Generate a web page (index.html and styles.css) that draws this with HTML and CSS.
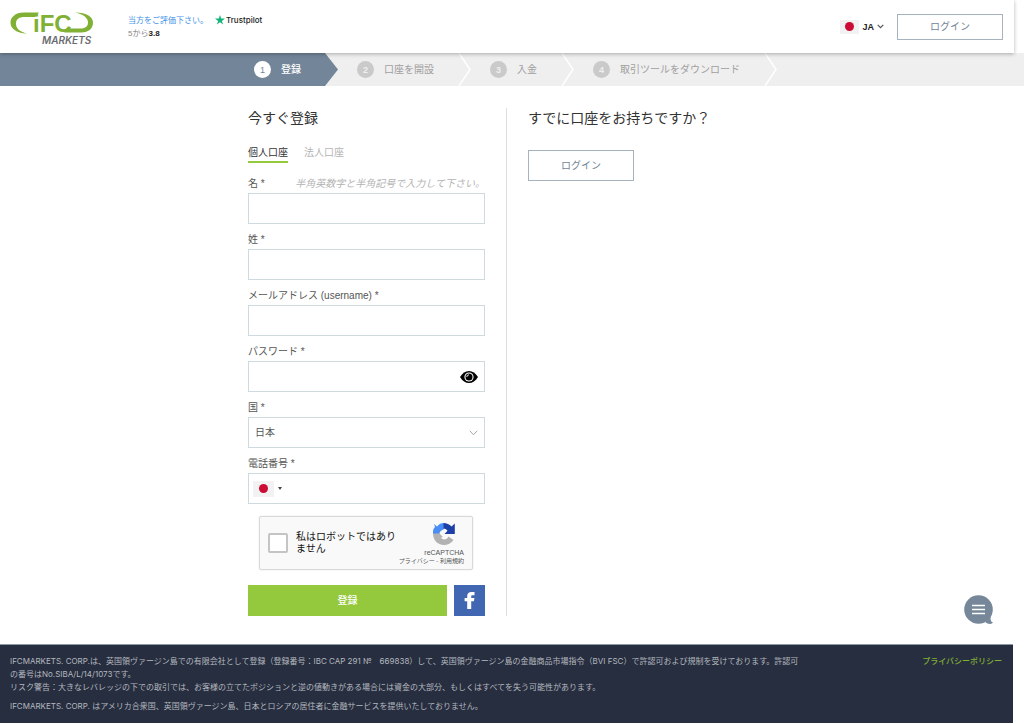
FILE: index.html
```html
<!DOCTYPE html>
<html lang="ja">
<head>
<meta charset="utf-8">
<meta name="viewport" content="width=device-width, initial-scale=1">
<title>IFC Markets - 登録</title>
<link rel="stylesheet" href="styles.css">
</head>
<body>
<header class="header">
  <a class="logo" href="#" aria-label="IFC Markets">
    <svg width="84" height="38" viewBox="10 8 84 38">
      <g fill="#80b034">
        <path d="M39 12.500H24C15 12.500 10.500 17.500 10.500 22.500C10.500 28.500 16 33 27 33.500C19.500 31.500 16 28.500 16 23.500C16 19 19.500 17 24 17H35Z"/>
        <path d="M64 32.500H81C89 32.500 93 28 93 23C93 17 87 12.500 75 12.500C84 14.500 88 18 88 22.500C88 26.500 85 28.500 80 28.500H70Z"/>
        <text class="logo-mark" x="33" y="32">iFC</text>
      </g>
      <text class="logo-sub" x="42" y="44" fill="#6b6c70">MARKETS</text>
    </svg>
  </a>
  <div class="rating">
    <div class="rating-row">
      <a class="rating-link" href="#">当方をご評価下さい。</a>
      <svg class="star" width="10" height="10" viewBox="0 0 10 10"><path fill="#13b67a" d="M5 0L6.200 3.600H10L6.900 5.900L8.100 9.600L5 7.300L1.900 9.600L3.100 5.900L0 3.600H3.800Z"/></svg>
      <span class="brand">Trustpilot</span>
    </div>
    <div class="score">5から<b>3.8</b></div>
  </div>
  <div class="header-actions">
    <button class="lang" type="button">
      <span class="flag flag-small"></span>
      JA
      <svg width="7" height="5" viewBox="0 0 7 5"><path d="M.7.8L3.500 3.600L6.300.8" fill="none" stroke="#555" stroke-width="1.200"/></svg>
    </button>
    <button class="outline-button header-login" type="button">ログイン</button>
  </div>
</header>

<ol class="steps">
  <li class="step active"><span class="num">1</span>登録
    <svg class="tip" width="13" height="33" viewBox="0 0 13 33"><path d="M0 0L13 16.500L0 33Z" fill="#738598"/></svg></li>
  <li class="step"><span class="num">2</span>口座を開設
    <svg class="tip" width="13" height="33" viewBox="0 0 13 33"><path d="M1 0L12 16.500L1 33" fill="none" stroke="#fff" stroke-width="1.500"/></svg></li>
  <li class="step"><span class="num">3</span>入金
    <svg class="tip" width="13" height="33" viewBox="0 0 13 33"><path d="M1 0L12 16.500L1 33" fill="none" stroke="#fff" stroke-width="1.500"/></svg></li>
  <li class="step"><span class="num">4</span>取引ツールをダウンロード
    <svg class="tip" width="13" height="33" viewBox="0 0 13 33"><path d="M1 0L12 16.500L1 33" fill="none" stroke="#fff" stroke-width="1.500"/></svg></li>
</ol>

<main class="content">
  <section class="register">
    <h1 class="title">今すぐ登録</h1>
    <nav class="tabs">
      <a class="tab current" href="#">個人口座</a>
      <a class="tab" href="#">法人口座</a>
    </nav>
    <form class="form">
      <div class="field">
        <div class="label-row"><label for="first">名 *</label><span class="hint">半角英数字と半角記号で入力して下さい。</span></div>
        <input class="control" id="first" type="text">
      </div>
      <div class="field">
        <div class="label-row"><label for="last">姓 *</label></div>
        <input class="control" id="last" type="text">
      </div>
      <div class="field">
        <div class="label-row"><label for="email">メールアドレス (username) *</label></div>
        <input class="control" id="email" type="email">
      </div>
      <div class="field">
        <div class="label-row"><label for="password">パスワード *</label></div>
        <div class="control-wrap">
          <input class="control" id="password" type="password">
          <button class="eye" type="button" aria-label="パスワードを表示">
            <svg width="18" height="12" viewBox="0 0 18 12"><path d="M0 6C2.500 2 5.500 0 9 0S15.500 2 18 6C15.500 10 12.500 12 9 12S2.500 10 0 6Z"/><circle cx="9" cy="6" r="4.600" fill="#fff"/><circle cx="9" cy="6" r="3.500"/><path d="M6.800 6A2.200 2.200 0 0 1 9 3.800" fill="none" stroke="#fff" stroke-width=".9"/></svg>
          </button>
        </div>
      </div>
      <div class="field">
        <div class="label-row"><label for="country">国 *</label></div>
        <div class="control-wrap">
          <select class="control" id="country"><option>日本</option></select>
          <svg class="select-arrow" width="9" height="6" viewBox="0 0 9 6"><path d="M.8.8L4.500 4.800L8.200.8" fill="none" stroke="#a5a5a5"/></svg>
        </div>
      </div>
      <div class="field">
        <div class="label-row"><label for="phone">電話番号 *</label></div>
        <div class="control phone">
          <button class="phone-country" type="button" aria-label="国番号">
            <span class="flag"></span>
            <svg width="4" height="3" viewBox="0 0 4 3"><path d="M0 0H4L2 3Z" fill="#444"/></svg>
          </button>
          <input class="phone-input" id="phone" type="tel">
        </div>
      </div>
      <div class="captcha">
        <input class="captcha-box" id="robot" type="checkbox">
        <label class="captcha-label" for="robot">私はロボットではありません</label>
        <div class="captcha-side">
          <svg width="24" height="24" viewBox="0 0 24 24">
            <path fill="#4a8ef5" d="M2 2L5 4.500C7 2 9 1 12 1V7L9.500 8.500C8 9.500 7.500 10.500 7.500 12H1V10C1 8 1.500 6.500 3 5Z"/>
            <path fill="#1c3fa8" d="M11.500 1C14.500 1 17.500 2.300 19.500 4.500L22.800 1.500V12H12.500L15.500 8.800C14.500 7.300 13 6.500 11.500 6.500Z"/>
            <path fill="#b2b2b2" d="M1 11.500H7.500L11 15L8.900 15.500C10.500 18.500 15 18 16.500 14.500L21.500 18C19 21.500 15.800 23 12 23C5.500 23 1 18 1 11.500Z"/>
          </svg>
          <span class="captcha-name">reCAPTCHA</span>
          <span class="captcha-terms"><a href="#">プライバシー</a> - <a href="#">利用規約</a></span>
        </div>
      </div>
      <div class="submit-row">
        <button class="submit" type="submit">登録</button>
        <button class="facebook" type="button" aria-label="Facebook">
          <svg width="12" height="19" viewBox="0 0 12 19"><path fill="#fff" d="M3.200 18V10.300H.6V7H3.200V5C3.200 2.300 4.900.9 7.500.9C8.700.9 9.900 1 10.500 1.100V4.200H8.700C7.500 4.200 7.200 4.700 7.200 5.500V7H10.400L9.900 10.300H7.200V18Z"/></svg>
        </button>
      </div>
    </form>
  </section>
  <section class="existing">
    <h2 class="title">すでに口座をお持ちですか？</h2>
    <button class="outline-button existing-login" type="button">ログイン</button>
  </section>
</main>

<footer class="footer">
  <div class="legal">
    <p>IFCMARKETS. CORP.は、英国領ヴァージン島での有限会社として登録（登録番号：IBC CAP 291 №　669838）して、英国領ヴァージン島の金融商品市場指令（BVI FSC）で許認可および規制を受けております。許認可<br>の番号はNo.SIBA/L/14/1073です。<br>リスク警告：大きなレバレッジの下での取引では、お客様の立てたポジションと逆の値動きがある場合には資金の大部分、もしくはすべてを失う可能性があります。</p>
    <p>IFCMARKETS. CORP. はアメリカ合衆国、英国領ヴァージン島、日本とロシアの居住者に金融サービスを提供いたしておりません。</p>
  </div>
  <a class="privacy" href="#">プライバシーポリシー</a>
</footer>

<button class="chat" type="button" aria-label="チャット">
  <svg width="30" height="30" viewBox="0 0 30 30"><circle cx="14.500" cy="14.500" r="14.300" fill="#758799"/><path d="M18 28C22 27 25 24 27 21C26 25 27 27 29 27.500C28 29.500 24 29.500 21 27Z" fill="#758799"/><path d="M8 10.500H21M8 14.500H21M8 18.500H21" stroke="#fff" stroke-width="1.500"/></svg>
</button>
</body>
</html>
```
FILE: styles.css
```css
* {
  box-sizing: border-box;
}

body {
  margin: 0;
  background: #fff;
  color: #555;
  font-family: "Liberation Sans", "Noto Sans CJK JP", sans-serif;
  font-size: 10px;
  line-height: 12px;
}

button,
input,
select {
  font: inherit;
  color: inherit;
}

button {
  padding: 0;
  border: 0;
  background: none;
  cursor: pointer;
}

a {
  color: inherit;
  text-decoration: none;
}

svg {
  display: block;
}

/* Header */
.header {
  position: relative;
  z-index: 1;
  display: flex;
  align-items: center;
  height: 53px;
  margin-right: 10px;
  padding: 0 11px 0 10px;
  background: #fff;
  box-shadow: 0 1px 4px rgba(0, 0, 0, 0.3);
}

.logo-mark {
  font-family: "Liberation Sans", sans-serif;
  font-size: 24px;
  font-weight: 700;
}

.logo-sub {
  font-family: Inter, sans-serif;
  font-size: 10px;
  font-weight: 600;
  font-style: italic;
}

.rating {
  margin-left: 34px;
  font-size: 8px;
  line-height: 13px;
}

.rating-row {
  display: flex;
  align-items: center;
}

.rating-link {
  color: #4393e6;
}

.star {
  margin-left: 7px;
}

.brand {
  margin-left: 1px;
  color: #222;
  font-weight: 500;
  font-family: Inter, sans-serif;
}

.score {
  color: #888;
}

.score b {
  color: #222;
}

.header-actions {
  display: flex;
  align-items: center;
  gap: 13px;
  margin-left: auto;
}

.lang {
  display: flex;
  align-items: center;
  gap: 3px;
  color: #222;
  font-size: 9px;
  font-weight: 700;
}

.flag {
  display: grid;
  place-items: center;
  width: 21px;
  height: 16px;
  background: #f2f2f2;
}

.flag::after {
  content: "";
  width: 9px;
  height: 9px;
  border-radius: 50%;
  background: #cc0c35;
}

.flag-small {
  width: 19px;
  height: 14px;
}

.outline-button {
  width: 106px;
  border: 1px solid #a6b2be;
  color: #738598;
}

.header-login {
  height: 26px;
}

/* Progress steps */
.steps {
  display: flex;
  margin: 0;
  padding: 0;
  background: #efefef;
  list-style: none;
}

.step {
  position: relative;
  display: flex;
  align-items: center;
  height: 33px;
  padding: 0 24px 0 32px;
  color: #a0a0a0;
  white-space: nowrap;
}

.step.active {
  padding-left: calc(50% - 258px);
  background: #738598;
  color: #fff;
  font-weight: 500;
}

.num {
  display: grid;
  place-items: center;
  width: 17px;
  height: 17px;
  margin-right: 10px;
  border-radius: 50%;
  background: #cacaca;
  color: #efefef;
  font-size: 9px;
  font-weight: 700;
}

.active .num {
  background: #fff;
  color: #738598;
  font-weight: 400;
}

.tip {
  position: absolute;
  top: 0;
  left: 100%;
}

/* Content */
.content {
  display: grid;
  grid-template-columns: 259px 1fr;
  max-width: 528px;
  margin: 0 auto;
  padding: 22px 0 28px;
}

.register {
  padding-right: 21px;
  border-right: 1px solid #ddd;
}

.existing {
  padding-left: 21px;
}

.title {
  margin: 0;
  color: #333;
  font-size: 14px;
  font-weight: 400;
  line-height: 20px;
}

.existing-login {
  height: 31px;
  margin-top: 22px;
}

.tabs {
  display: flex;
  gap: 16px;
  padding: 18px 0 12px;
}

.tab {
  padding-bottom: 1px;
  border-bottom: 2px solid transparent;
  color: #b5b5b5;
  line-height: 14px;
}

.tab.current {
  border-color: #95c93d;
  color: #333;
}

.field {
  margin-bottom: 7px;
}

.label-row {
  display: flex;
  justify-content: space-between;
  line-height: 18px;
}

.hint {
  color: #b3b3b3;
  font-style: italic;
}

.control {
  display: block;
  width: 100%;
  height: 31px;
  padding: 0 6px;
  border: 1px solid #cfd9e0;
  border-radius: 0;
  background: #fff;
  appearance: none;
}

.control-wrap {
  position: relative;
}

.eye {
  position: absolute;
  top: 10px;
  right: 7px;
}

.select-arrow {
  position: absolute;
  top: 13px;
  right: 7px;
  pointer-events: none;
}

.phone {
  display: flex;
  align-items: center;
  gap: 6px;
  padding: 0 4px;
}

.phone-country {
  display: flex;
  align-items: center;
  gap: 4px;
}

.phone-input {
  flex: 1;
  min-width: 0;
  padding: 0;
  border: 0;
}

.captcha {
  display: flex;
  align-items: center;
  gap: 8px;
  height: 54px;
  margin: 12px 12px 15px 11px;
  padding: 0 8px;
  border: 1px solid #d8d8d8;
  border-radius: 2px;
  background: #f9f9f9;
  box-shadow: 0 0 2px rgba(0, 0, 0, 0.1);
}

.captcha-box {
  flex: none;
  width: 20px;
  height: 20px;
  margin: 0;
  border: 2px solid #c4c4c4;
  border-radius: 2px;
  background: #fff;
  appearance: none;
}

.captcha-label {
  flex: none;
  width: 100px;
  color: #111;
  word-break: break-all;
}

.captcha-side {
  display: flex;
  flex: 1;
  flex-direction: column;
  align-items: flex-end;
  min-width: 0;
  color: #555;
  white-space: nowrap;
}

.captcha-side svg {
  margin: 2px 8px 2px 0;
}

.captcha-name {
  font-size: 7px;
  line-height: 9px;
}

.captcha-terms {
  font-size: 6px;
  line-height: 9px;
}

.submit-row {
  display: flex;
  gap: 7px;
}

.submit {
  flex: 1;
  height: 31px;
  background: #95c93d;
  color: #fff;
  font-weight: 500;
}

.facebook {
  display: grid;
  place-items: center;
  width: 31px;
  height: 31px;
  background: #4267b2;
}

/* Footer */
.footer {
  display: flex;
  justify-content: space-between;
  margin-right: 11px;
  padding: 10px 11px 10px 10px;
  border-top: 1px solid #8b989e;
  background: #272e40;
  color: #b4b8bf;
  font-family: Inter, "Noto Sans CJK JP", sans-serif;
  font-size: 8px;
  line-height: 13px;
}

.legal p {
  margin: 0;
}

.legal p + p {
  margin-top: 6px;
}

.privacy {
  flex: none;
  color: #80b034;
  font-weight: 500;
}

.chat {
  position: fixed;
  right: 30px;
  bottom: 99px;
  z-index: 2;
}
```
